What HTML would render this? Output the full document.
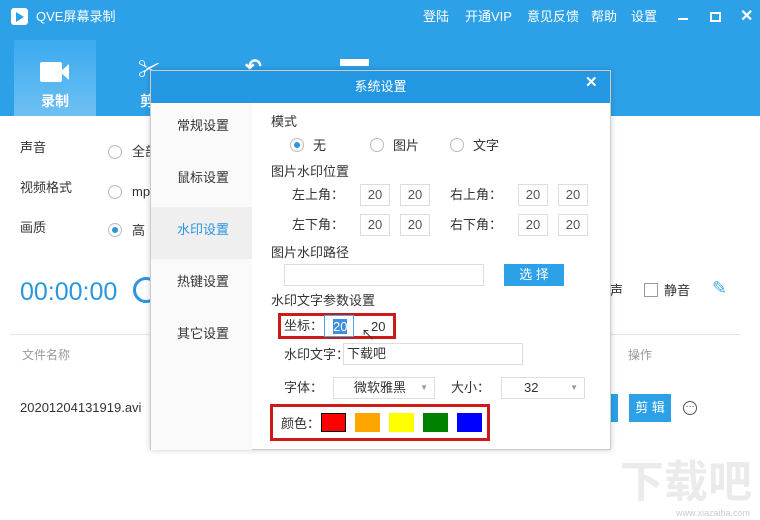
<!DOCTYPE html>
<html><head><meta charset="utf-8"><style>
*{margin:0;padding:0;box-sizing:border-box}
body{width:760px;height:520px;overflow:hidden;background:#fff;font-family:"Liberation Sans","Noto Sans CJK SC",sans-serif;font-size:13px;line-height:16px;color:#333;position:relative}
.a{position:absolute;white-space:nowrap}
.hdr{left:0;top:0;width:760px;height:116px;background:#2ca1e8}
.tab{left:14px;top:40px;width:82px;height:76px;background:linear-gradient(#3aaaf0,#6ec0f2)}
.w{color:#fff}
.dlg{left:150px;top:70px;width:461px;height:380px;background:#fff;border:1px solid #ccc;box-shadow:0 0 6px rgba(0,0,0,.2)}
.inp{border:1px solid #ddd;background:#fff;text-align:center;height:22px;line-height:20px;width:30px;color:#555}
.rad{width:14px;height:14px;border:1px solid #bbb;border-radius:50%;background:#fff}
.rad.on::after{content:"";position:absolute;left:3px;top:3px;width:6px;height:6px;border-radius:50%;background:#2a96e0}
.sw{width:25px;height:19px}
</style></head><body>
<div class="a hdr"></div>
<div class="a tab"></div>
<div class="a" style="left:11px;top:8px;width:17px;height:17px;border:2px solid #fff;border-radius:3px;background:#fff"></div>
<div class="a" style="left:16px;top:12px;width:0;height:0;border-left:8px solid #2ca1e8;border-top:5px solid transparent;border-bottom:5px solid transparent"></div>
<div class="a w" style="left:36px;top:9px;font-size:13px">QVE屏幕录制</div>
<div class="a w" style="left:423px;top:9px">登陆</div>
<div class="a w" style="left:465px;top:9px">开通VIP</div>
<div class="a w" style="left:527px;top:9px">意见反馈</div>
<div class="a w" style="left:591px;top:9px">帮助</div>
<div class="a w" style="left:631px;top:9px">设置</div>
<div class="a" style="left:678px;top:18px;width:10px;height:2px;background:#fff"></div>
<div class="a" style="left:710px;top:12px;width:11px;height:10px;border:2px solid #fff"></div>
<div class="a w" style="left:740px;top:9px;font-size:16px;font-weight:bold">✕</div>
<div class="a" style="left:40px;top:62px;width:22px;height:20px;background:#fff;border-radius:2px"></div>
<div class="a" style="left:60px;top:64px;width:0;height:0;border-right:9px solid #fff;border-top:8px solid transparent;border-bottom:8px solid transparent"></div>
<div class="a w" style="left:41px;top:93px;font-size:14px;font-weight:bold">录制</div>
<div class="a w" style="left:138px;top:58px;font-size:22px;line-height:24px">✂</div>
<div class="a w" style="left:140px;top:93px;font-size:14px;font-weight:bold">剪</div>
<div class="a w" style="left:245px;top:56px;font-size:20px;font-weight:bold;line-height:22px">↶</div>
<div class="a" style="left:340px;top:59px;width:29px;height:7px;background:#fff"></div>
<div class="a" style="left:20px;top:140px">声音</div>
<div class="a" style="left:20px;top:180px">视频格式</div>
<div class="a" style="left:20px;top:220px">画质</div>
<div class="a rad" style="left:108px;top:145px"></div><div class="a" style="left:132px;top:144px">全部</div>
<div class="a rad" style="left:108px;top:185px"></div><div class="a" style="left:132px;top:184px">mp</div>
<div class="a rad on" style="left:108px;top:223px"></div><div class="a" style="left:132px;top:223px">高</div>
<div class="a" style="left:20px;top:278px;font-size:25px;line-height:28px;color:#2a96e0">00:00:00</div>
<div class="a" style="left:133px;top:277px;width:26px;height:26px;border:3px solid #2a96e0;border-radius:50%"></div>
<div class="a" style="left:10px;top:334px;width:730px;height:1px;background:#e5e5e5"></div>
<div class="a" style="left:22px;top:347px;color:#999;font-size:12px">文件名称</div>
<div class="a" style="left:20px;top:400px">20201204131919.avi</div>
<div class="a" style="left:610px;top:283px">声</div>
<div class="a" style="left:644px;top:283px;width:14px;height:14px;border:1px solid #999"></div>
<div class="a" style="left:664px;top:283px">静音</div>
<div class="a" style="left:712px;top:278px;color:#4aa8e8;font-size:18px;line-height:20px">✎</div>
<div class="a" style="left:628px;top:347px;color:#999;font-size:12px">操作</div>
<div class="a" style="left:598px;top:394px;width:20px;height:28px;background:#2ca1e8;color:#fff;line-height:28px">改</div>
<div class="a" style="left:629px;top:394px;width:42px;height:28px;background:#2ca1e8;color:#fff;line-height:28px;text-align:center">剪 辑</div>
<div class="a" style="left:683px;top:401px;width:14px;height:14px;border:1px solid #555;border-radius:50%;font-size:9px;line-height:9px;text-align:center">···</div>
<div class="a" style="left:620px;top:458px;font-size:44px;line-height:50px;color:#ebebeb;font-weight:bold">下载吧</div>
<div class="a" style="left:676px;top:508px;font-size:9px;line-height:10px;color:#ccc">www.xiazaiba.com</div>
<div class="a dlg">
 <div class="a" style="left:0;top:0;width:459px;height:32px;background:#2397e2"></div>
 <div class="a w" style="left:0;top:8px;width:459px;text-align:center">系统设置</div>
 <div class="a w" style="left:434px;top:4px;font-size:15px;font-weight:bold">✕</div>
 <div class="a" style="left:0;top:32px;width:101px;height:347px;background:#fafafa"></div>
 <div class="a" style="left:0;top:136px;width:101px;height:52px;background:#efefef"></div>
 <div class="a" style="left:26px;top:47px">常规设置</div>
 <div class="a" style="left:26px;top:99px">鼠标设置</div>
 <div class="a" style="left:26px;top:151px;color:#2a96e0">水印设置</div>
 <div class="a" style="left:26px;top:203px">热键设置</div>
 <div class="a" style="left:26px;top:255px">其它设置</div>
 <div class="a" style="left:120px;top:43px">模式</div>
 <div class="a rad on" style="left:139px;top:67px"></div><div class="a" style="left:162px;top:67px">无</div>
 <div class="a rad" style="left:219px;top:67px"></div><div class="a" style="left:242px;top:67px">图片</div>
 <div class="a rad" style="left:299px;top:67px"></div><div class="a" style="left:322px;top:67px">文字</div>
 <div class="a" style="left:120px;top:93px">图片水印位置</div>
 <div class="a" style="left:141px;top:116px">左上角：</div>
 <div class="a inp" style="left:209px;top:113px">20</div><div class="a inp" style="left:249px;top:113px">20</div>
 <div class="a" style="left:299px;top:116px">右上角：</div>
 <div class="a inp" style="left:367px;top:113px">20</div><div class="a inp" style="left:407px;top:113px">20</div>
 <div class="a" style="left:141px;top:146px">左下角：</div>
 <div class="a inp" style="left:209px;top:143px">20</div><div class="a inp" style="left:249px;top:143px">20</div>
 <div class="a" style="left:299px;top:146px">右下角：</div>
 <div class="a inp" style="left:367px;top:143px">20</div><div class="a inp" style="left:407px;top:143px">20</div>
 <div class="a" style="left:120px;top:174px">图片水印路径</div>
 <div class="a" style="left:133px;top:193px;width:200px;height:22px;border:1px solid #ddd"></div>
 <div class="a" style="left:353px;top:193px;width:60px;height:22px;background:#2ca1e8;color:#fff;text-align:center;line-height:22px">选 择</div>
 <div class="a" style="left:120px;top:222px">水印文字参数设置</div>
 <div class="a" style="left:127px;top:242px;width:118px;height:26px;border:3px solid #cc1a1a"></div>
 <div class="a" style="left:133px;top:247px">坐标：</div>
 <div class="a" style="left:173px;top:244px;width:30px;height:22px;border:1px solid #4aa8e8"></div>
 <div class="a" style="left:182px;top:248px;background:#3a8fe0;color:#fff;line-height:15px">20</div>
 <div class="a" style="left:220px;top:248px">20</div>
 <div class="a" style="left:210px;top:256px;font-size:14px">↖</div>
 <div class="a" style="left:133px;top:276px">水印文字：</div>
 <div class="a" style="left:192px;top:272px;width:180px;height:22px;border:1px solid #ddd;padding-left:3px;line-height:20px">下载吧</div>
 <div class="a" style="left:133px;top:309px">字体：</div>
 <div class="a" style="left:182px;top:306px;width:102px;height:22px;border:1px solid #ddd;line-height:20px;padding-left:20px">微软雅黑<span style="position:absolute;right:6px;font-size:8px;color:#999">▼</span></div>
 <div class="a" style="left:300px;top:309px">大小：</div>
 <div class="a" style="left:350px;top:306px;width:84px;height:22px;border:1px solid #ddd;line-height:20px;padding-left:22px">32<span style="position:absolute;right:6px;font-size:8px;color:#999">▼</span></div>
 <div class="a" style="left:119px;top:333px;width:220px;height:37px;border:3px solid #cc1a1a"></div>
 <div class="a" style="left:130px;top:345px">颜色：</div>
 <div class="a sw" style="left:170px;top:342px;background:#f00;border:1px solid #000"></div>
 <div class="a sw" style="left:204px;top:342px;background:#ffa500"></div>
 <div class="a sw" style="left:238px;top:342px;background:#ff0"></div>
 <div class="a sw" style="left:272px;top:342px;background:#008000"></div>
 <div class="a sw" style="left:306px;top:342px;background:#00f"></div>
</div>
</body></html>
